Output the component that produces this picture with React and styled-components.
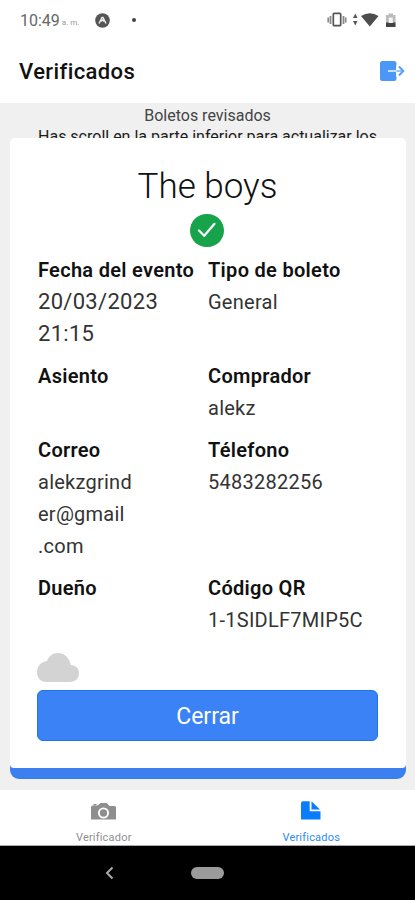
import styled, { createGlobalStyle } from 'styled-components'

const GlobalStyle=createGlobalStyle`
*{
  box-sizing:border-box;
}
body{
  margin:0;
  background-color:#fff;
  font-family:Roboto, "Liberation Sans", sans-serif;
  color:#111;
}
`
const Screen=styled.div`
display:flex;
flex-direction:column;
width:415px;
height:900px;
overflow:hidden;
`
const StatusBar=styled.div`
display:flex;
align-items:center;
justify-content:space-between;
height:40px;
padding:0 17px 0 20px;
color:#555;
`
const StatusLeft=styled.div`
display:flex;
align-items:center;
`
const Clock=styled.span`
font-size:16px;
color:#666;
`
const Meridiem=styled.span`
width:20px;
margin:5px 13px 0 2px;
font-size:8px;
white-space:nowrap;
color:#999;
`
const Dot=styled.div`
width:4px;
height:4px;
margin-left:22px;
border-radius:50%;
background-color:#444;
`
const TitleBar=styled.div`
display:flex;
align-items:center;
justify-content:space-between;
height:63px;
padding:0 10px 2px 19px;
`
const ScreenTitle=styled.h1`
margin:0;
padding-top:2px;
font-size:22px;
font-weight:500;
letter-spacing:0.4px;
`
const Content=styled.div`
display:flex;
flex-direction:column;
height:687px;
background-color:#f0f0f0;
`
const Intro=styled.div`
height:35px;
padding-top:2px;
overflow:hidden;
text-align:center;
white-space:nowrap;
line-height:21px;
font-size:16px;
color:#444;
`
const IntroHint=styled.div`
color:#1c1c1c;
`
const Ticket=styled.div`
height:641px;
margin:0 9px 0 10px;
padding-bottom:11px;
border-radius:5px 5px 9px 9px;
background:linear-gradient(#fff 600px, #3b7ff0 600px);
`
const Modal=styled.div`
display:flex;
flex-direction:column;
height:630px;
padding:28px 28px 27px 27px;
border-radius:5px 5px 4px 4px;
background-color:#fff;
`
const EventName=styled.h2`
margin:0;
height:48px;
line-height:42px;
text-align:center;
font-size:35px;
font-weight:300;
letter-spacing:0;
color:#111;
`
const CheckCircle=styled.div`
display:flex;
align-items:center;
justify-content:center;
width:34px;
height:34px;
margin:0 auto 7px 153px;
border-radius:50%;
background-color:#16a34a;
`
const Details=styled.div`
display:grid;
grid-template-columns:170px 1fr;
row-gap:10px;
padding-left:1px;
line-height:32px;
`
const Label=styled.div`
font-size:20px;
font-weight:600;
white-space:nowrap;
letter-spacing:0.3px;
`
const Value=styled.div`
font-size:${props => props.$size || 20}px;
font-weight:400;
white-space:pre-line;
letter-spacing:${props => props.$spacing || 0.25}px;
color:#333;
`
const CloudRow=styled.div`
display:flex;
align-items:flex-end;
height:46px;
margin-bottom:8px;
`
const CloseButton=styled.button`
height:51px;
padding:0;
border:1px solid #1f73ea;
border-radius:6px;
background-color:#3b82f6;
color:#fff;
font-family:inherit;
font-size:23px;
line-height:51px;
`
const TabBar=styled.div`
display:flex;
height:56px;
border-bottom:1px solid #aaa;
background-color:#fff;
`
const Tab=styled.div`
display:flex;
flex:1;
flex-direction:column;
align-items:center;
justify-content:space-between;
padding-top:9px;
font-size:11px;
line-height:15px;
letter-spacing:0.2px;
color:${props => props.$active ? '#2b8bf5' : '#8e8e8f'};
`
const SystemNav=styled.div`
display:grid;
grid-template-columns:1fr 33px 1fr;
align-items:center;
height:54px;
background-color:#000;
`
const BackArea=styled.div`
display:flex;
padding-left:105px;
`
const HomePill=styled.div`
height:12px;
border-radius:6px;
background-color:#9b9b9b;
`

const details=[
  { label:'Fecha del evento', value:'20/03/2023\n21:15', size:22, spacing:0.3 },
  { label:'Tipo de boleto', value:'General' },
  { label:'Asiento', value:'' },
  { label:'Comprador', value:'alekz' },
  { label:'Correo', value:'alekzgrind\ner@gmail\n.com' },
  { label:'Télefono', value:'5483282256' },
  { label:'Dueño', value:'' },
  { label:'Código QR', value:'1-1SIDLF7MIP5C' },
]

function AppBadge() {
  return (
    <svg width="15" height="15" viewBox="0 0 15 15">
      <circle cx="7.5" cy="7.5" r="7.3" fill="#555" />
      <path d="M4 10.5 L7 4.5 H8 L11 10.5 M5.8 8.5 L7.5 7 L9.2 8.5" fill="none" stroke="#eee" strokeWidth="1.4" />
    </svg>
  )
}

function StatusIcons() {
  return (
    <svg width="72" height="18" viewBox="0 0 72 18">
      <rect x="7.3" y="2.3" width="7.4" height="12.4" rx="1" fill="#fff" stroke="#555" strokeWidth="1.7" />
      <path d="M4.5 5 V13 M17.5 5 V13" stroke="#888" strokeWidth="1.8" />
      <path d="M2.2 6.5 V11.5 M19.7 6.5 V11.5" stroke="#888" strokeWidth="1.6" />
      <path d="M27 7 L29.3 2.5 L31.5 7 Z M27 10 H31.5 L29.3 14.5 Z" fill="#555" />
      <path d="M35 5 Q44 -0.5 52.5 5 L43.8 15.5 Z" fill="#4d4d4d" />
      <path d="M60 4 H62.5 V2.5 H67 V4 H69.5 V16 H60 Z" fill="#bbb" />
      <path d="M60 11.5 H69.5 V16 H60 Z" fill="#444" />
      <path d="M62.7 12 V6.5 H66.8 V12 Z" fill="#f5f5f5" />
    </svg>
  )
}

function ExitIcon() {
  return (
    <svg width="25" height="20" viewBox="0 0 25 20">
      <rect x="0" y="0" width="16.5" height="20" rx="2.5" fill="#4a97f7" />
      <path d="M16 4 L25 10 L16 16 Z" fill="#fff" />
      <path d="M8 10 H17" stroke="#d5e7ff" strokeWidth="1.8" />
      <path d="M16.5 10 H22" stroke="#8dbcf8" strokeWidth="1.8" />
      <path d="M19 5.5 L23.3 10 L19 14.5" fill="none" stroke="#5a9ff5" strokeWidth="2" />
    </svg>
  )
}

function CloudIcon() {
  return (
    <svg width="42" height="29" viewBox="0 0 42 29">
      <path d="M9.5 29 C4 29 0 25.3 0 19.5 C0 13 4 9 10 8 C12 3 15.5 0 21 0 C27.5 0 32 4.5 33.8 12 C38.5 12.2 42 15 42 20 C42 25.5 38.5 29 33 29 Z" fill="#d3d3d3" />
    </svg>
  )
}

function CameraIcon() {
  return (
    <svg width="25" height="24" viewBox="0 0 25 24">
      <path d="M2 6.5 H6.5 L9.5 4 H15.8 L18.5 7 H23.5 Q25 7 25 8.5 V20.5 H0 V8.5 Q0 6.5 2 6.5 Z" fill="#8e8e8f" />
      <path d="M2.5 6.5 V5 H5.5 V6.5 Z" fill="#8e8e8f" />
      <circle cx="12.5" cy="14" r="4.6" fill="#8e8e8f" stroke="#fff" strokeWidth="1.9" />
    </svg>
  )
}

function DocumentIcon() {
  return (
    <svg width="20" height="24" viewBox="0 0 20 24">
      <path d="M2 2.3 H8.7 V12.3 H19.5 V20.5 H0 V4.3 Q0 2.3 2 2.3 Z" fill="#0a7cff" />
      <path d="M10.5 2.3 L19 10.5 H10.5 Z" fill="#0a7cff" />
    </svg>
  )
}

function App() {
  return (
    <>
      <GlobalStyle />
      <Screen>
        <StatusBar>
          <StatusLeft>
            <Clock>10:49</Clock>
            <Meridiem>a. m.</Meridiem>
            <AppBadge />
            <Dot />
          </StatusLeft>
          <StatusIcons />
        </StatusBar>
        <TitleBar>
          <ScreenTitle>Verificados</ScreenTitle>
          <ExitIcon />
        </TitleBar>
        <Content>
          <Intro>
            Boletos revisados
            <IntroHint>Has scroll en la parte inferior para actualizar los</IntroHint>
          </Intro>
          <Ticket>
            <Modal>
              <EventName>The boys</EventName>
              <CheckCircle>
                <svg width="20" height="16" viewBox="0 0 20 16">
                  <path d="M2 8.5 L7.2 13.8 L17.5 1.8" fill="none" stroke="#fff" strokeWidth="2.2" strokeLinecap="round" strokeLinejoin="round" />
                </svg>
              </CheckCircle>
              <Details>
                {details.map(item => (
                  <div key={item.label}>
                    <Label>{item.label}</Label>
                    <Value $size={item.size} $spacing={item.spacing}>{item.value}</Value>
                  </div>
                ))}
              </Details>
              <CloudRow>
                <CloudIcon />
              </CloudRow>
              <CloseButton>Cerrar</CloseButton>
            </Modal>
          </Ticket>
        </Content>
        <TabBar>
          <Tab>
            <CameraIcon />
            Verificador
          </Tab>
          <Tab $active>
            <DocumentIcon />
            Verificados
          </Tab>
        </TabBar>
        <SystemNav>
          <BackArea>
            <svg width="9" height="14" viewBox="0 0 9 14">
              <path d="M7.5 1.5 L2 7 L7.5 12.5" fill="none" stroke="#aaa" strokeWidth="2" />
            </svg>
          </BackArea>
          <HomePill />
        </SystemNav>
      </Screen>
    </>
  )
}

export default App
